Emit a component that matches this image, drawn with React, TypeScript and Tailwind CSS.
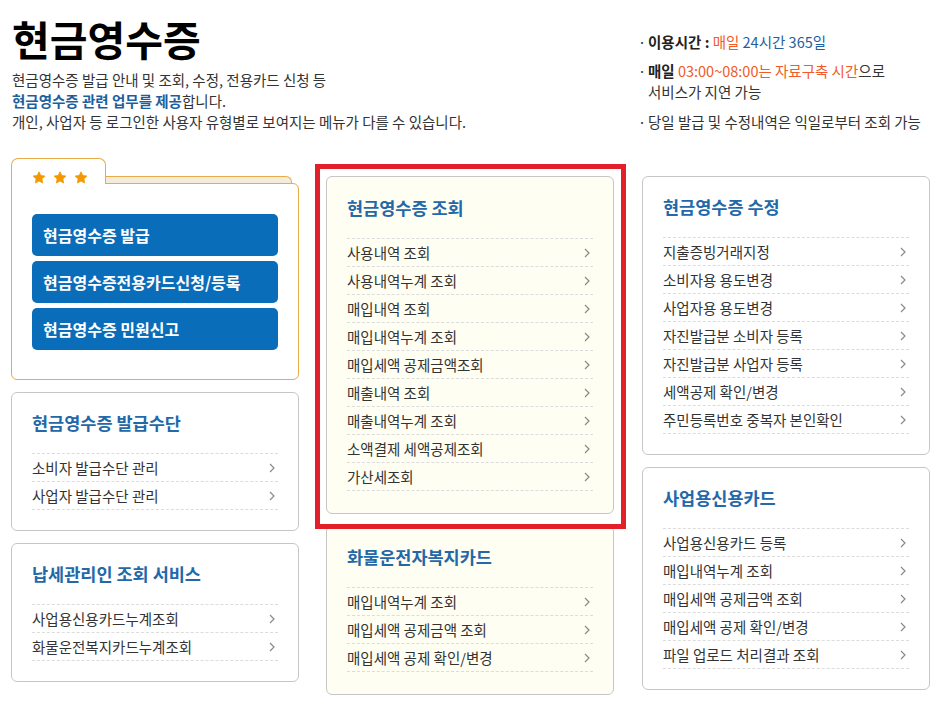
import clsx from "clsx";

// 메뉴 카드 데이터
interface MenuCardData {
  title: string;
  items: string[];
}

const ISSUE_MEANS: MenuCardData = {
  title: "현금영수증 발급수단",
  items: ["소비자 발급수단 관리", "사업자 발급수단 관리"],
};

const AGENT_SERVICE: MenuCardData = {
  title: "납세관리인 조회 서비스",
  items: ["사업용신용카드누계조회", "화물운전복지카드누계조회"],
};

const INQUIRY: MenuCardData = {
  title: "현금영수증 조회",
  items: [
    "사용내역 조회",
    "사용내역누계 조회",
    "매입내역 조회",
    "매입내역누계 조회",
    "매입세액 공제금액조회",
    "매출내역 조회",
    "매출내역누계 조회",
    "소액결제 세액공제조회",
    "가산세조회",
  ],
};

const WELFARE_CARD: MenuCardData = {
  title: "화물운전자복지카드",
  items: ["매입내역누계 조회", "매입세액 공제금액 조회", "매입세액 공제 확인/변경"],
};

const MODIFY: MenuCardData = {
  title: "현금영수증 수정",
  items: [
    "지출증빙거래지정",
    "소비자용 용도변경",
    "사업자용 용도변경",
    "자진발급분 소비자 등록",
    "자진발급분 사업자 등록",
    "세액공제 확인/변경",
    "주민등록번호 중복자 본인확인",
  ],
};

const BUSINESS_CARD: MenuCardData = {
  title: "사업용신용카드",
  items: [
    "사업용신용카드 등록",
    "매입내역누계 조회",
    "매입세액 공제금액 조회",
    "매입세액 공제 확인/변경",
    "파일 업로드 처리결과 조회",
  ],
};

const MAIN_BUTTONS = ["현금영수증 발급", "현금영수증전용카드신청/등록", "현금영수증 민원신고"];

function Chevron() {
  return (
    <svg width="6" height="10" viewBox="0 0 6 10" className="mr-[3px] shrink-0">
      <polyline points="1,1 5,5 1,9" fill="none" stroke="#8a8a8a" strokeWidth="1.2" />
    </svg>
  );
}

function Star() {
  return (
    <svg width="14" height="13" viewBox="0 0 24 23">
      <path
        d="M12 1.5l3.1 6.6 7.2.9-5.3 5 1.4 7.1L12 17.6l-6.4 3.5 1.4-7.1-5.3-5 7.2-.9z"
        fill="#f39800"
        stroke="#f39800"
        strokeWidth="1.5"
        strokeLinejoin="round"
      />
    </svg>
  );
}

function MenuCard({ data, cream = false }: { data: MenuCardData; cream?: boolean }) {
  return (
    <div
      className={clsx(
        "rounded-[6px] border border-[#c6c6c6] px-[20px]",
        cream ? "bg-[#fffef2] pt-[19px] pb-[22px]" : "bg-white pt-[18px] pb-[20px]"
      )}
    >
      <h3 className="mb-[18px] text-[17.5px] leading-[24px] font-bold text-[#2368a8]">{data.title}</h3>
      <ul className="border-t border-dashed border-[#dcdcdc]">
        {data.items.map((item) => (
          <li
            key={item}
            className="flex h-[28px] items-center justify-between border-b border-dashed border-[#dcdcdc] text-[14.5px] text-[#333]"
          >
            <span>{item}</span>
            <Chevron />
          </li>
        ))}
      </ul>
    </div>
  );
}

// 별 세 개 달린 폴더 모양 카드
function StarFolder() {
  return (
    <div className="relative pt-[25px]">
      <div className="absolute left-[85px] top-[18px] h-[7px] w-[196px] rounded-tr-[6px] border border-b-0 border-[#e8ab4a] bg-[#f4ebda]" />
      <div className="absolute left-0 top-0 z-10 flex h-[26px] w-[95px] gap-[7px] rounded-t-[7px] border border-b-0 border-[#e8ab4a] bg-white pl-[20px] pt-[12px]">
        <Star />
        <Star />
        <Star />
      </div>
      <div className="flex flex-col gap-[5px] rounded-[6px] rounded-tl-none border border-[#e8ab4a] bg-white px-[20px] pt-[30px] pb-[29px]">
        {MAIN_BUTTONS.map((label) => (
          <div
            key={label}
            className="flex h-[42px] items-center rounded-[5px] bg-[#0a6dba] pl-[11px] text-[16px] font-bold text-white"
          >
            {label}
          </div>
        ))}
      </div>
    </div>
  );
}

export default function App() {
  return (
    <div className="min-h-[704px] w-[942px] bg-white pt-[16px] font-['Noto_Sans_CJK_KR','Malgun_Gothic',sans-serif] text-[#333]">
      <header className="flex h-[142px]">
        <div className="w-[626px] pl-[12px]">
          <h1 className="text-[41px] leading-[44px] font-bold text-black">현금영수증</h1>
          <div className="mt-[9px] text-[14.5px] leading-[21px]">
            <p>현금영수증 발급 안내 및 조회, 수정, 전용카드 신청 등</p>
            <p>
              <b className="text-[#1c5f9c]">현금영수증 관련 업무를 제공</b>합니다.
            </p>
            <p>개인, 사업자 등 로그인한 사용자 유형별로 보여지는 메뉴가 다를 수 있습니다.</p>
          </div>
        </div>
        <ul className="flex flex-col gap-[8px] pl-[12px] pt-[15px] text-[14.5px] leading-[21px]">
          <li className="flex">
            <span className="w-[10px]">·</span>
            <span>
              <b className="text-[#222]">이용시간 :</b> <span className="text-[#f15a29]">매일</span>{" "}
              <span className="text-[#1f5f9e]">24시간 365일</span>
            </span>
          </li>
          <li className="flex">
            <span className="w-[10px]">·</span>
            <span>
              <b className="text-[#222]">매일</b>{" "}
              <span className="text-[#f15a29]">03:00~08:00는 자료구축 시간</span>으로
              <br />
              서비스가 지연 가능
            </span>
          </li>
          <li className="mt-[1px] flex">
            <span className="w-[10px]">·</span>
            <span>당일 발급 및 수정내역은 익일로부터 조회 가능</span>
          </li>
        </ul>
      </header>

      <main className="flex items-start pl-[11px]">
        <section className="flex w-[288px] flex-col gap-[12px]">
          <StarFolder />
          <MenuCard data={ISSUE_MEANS} />
          <MenuCard data={AGENT_SERVICE} />
        </section>

        <section className="ml-[27px] mt-[18px] flex w-[288px] flex-col gap-[11px]">
          <div className="relative">
            <MenuCard data={INQUIRY} cream />
            {/* 강조 표시 빨간 테두리 */}
            <div className="pointer-events-none absolute -bottom-[15px] -left-[11px] -right-[12px] -top-[12px] z-10 border-[5px] border-[#e3202a]" />
          </div>
          <MenuCard data={WELFARE_CARD} cream />
        </section>

        <section className="ml-[28px] mt-[18px] flex w-[288px] flex-col gap-[12px]">
          <MenuCard data={MODIFY} />
          <MenuCard data={BUSINESS_CARD} />
        </section>
      </main>
    </div>
  );
}
